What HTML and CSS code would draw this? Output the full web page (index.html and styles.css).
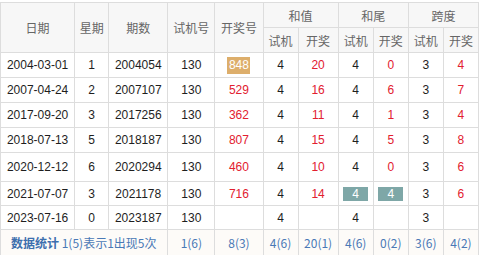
FILE: index.html
```html
<!DOCTYPE html>
<html lang="zh">
<head>
<meta charset="utf-8">
<title>开奖号码统计</title>
<link rel="stylesheet" href="styles.css">
</head>
<body>
<div class="wrap">
<table class="tbl">
  <colgroup>
    <col class="c-date"><col class="c-week"><col class="c-issue"><col class="c-test"><col class="c-open">
    <col class="c-s"><col class="c-s2"><col class="c-s"><col class="c-s"><col class="c-s"><col class="c-s">
  </colgroup>
  <thead>
    <tr class="h1">
      <th rowspan="2">日期</th>
      <th rowspan="2">星期</th>
      <th rowspan="2">期数</th>
      <th rowspan="2">试机号</th>
      <th rowspan="2">开奖号</th>
      <th colspan="2">和值</th>
      <th colspan="2">和尾</th>
      <th colspan="2">跨度</th>
    </tr>
    <tr class="h2">
      <th>试机</th><th>开奖</th><th>试机</th><th>开奖</th><th>试机</th><th>开奖</th>
    </tr>
  </thead>
  <tbody>
    <tr class="r">
      <td>2004-03-01</td><td>1</td><td>2004054</td><td>130</td>
      <td><span class="badge-gold">848</span></td>
      <td>4</td><td class="red">20</td><td>4</td><td class="red">0</td><td>3</td><td class="red">4</td>
    </tr>
    <tr class="r">
      <td>2007-04-24</td><td>2</td><td>2007107</td><td>130</td>
      <td class="red">529</td>
      <td>4</td><td class="red">16</td><td>4</td><td class="red">6</td><td>3</td><td class="red">7</td>
    </tr>
    <tr class="r">
      <td>2017-09-20</td><td>3</td><td>2017256</td><td>130</td>
      <td class="red">362</td>
      <td>4</td><td class="red">11</td><td>4</td><td class="red">1</td><td>3</td><td class="red">4</td>
    </tr>
    <tr class="r">
      <td>2018-07-13</td><td>5</td><td>2018187</td><td>130</td>
      <td class="red">807</td>
      <td>4</td><td class="red">15</td><td>4</td><td class="red">5</td><td>3</td><td class="red">8</td>
    </tr>
    <tr class="r tall">
      <td>2020-12-12</td><td>6</td><td>2020294</td><td>130</td>
      <td class="red">460</td>
      <td>4</td><td class="red">10</td><td>4</td><td class="red">0</td><td>3</td><td class="red">6</td>
    </tr>
    <tr class="r short">
      <td>2021-07-07</td><td>3</td><td>2021178</td><td>130</td>
      <td class="red">716</td>
      <td>4</td><td class="red">14</td><td><span class="badge-teal">4</span></td><td><span class="badge-teal">4</span></td><td>3</td><td class="red">6</td>
    </tr>
    <tr class="r short">
      <td>2023-07-16</td><td>0</td><td>2023187</td><td>130</td>
      <td></td>
      <td>4</td><td></td><td>4</td><td></td><td>3</td><td></td>
    </tr>
  </tbody>
  <tfoot>
    <tr class="foot">
      <td colspan="3" class="foot-label"><b>数据统计</b> 1(5)表示1出现5次</td>
      <td>1(6)</td><td>8(3)</td><td>4(6)</td><td>20(1)</td><td>4(6)</td><td>0(2)</td><td>3(6)</td><td>4(2)</td>
    </tr>
  </tfoot>
</table>
</div>
</body>
</html>
```
FILE: styles.css
```css
html, body {
  margin: 0;
  padding: 0;
  background: #ffffff;
}

.wrap {
  padding-top: 2px;
  width: 479px;
}

.tbl {
  border-collapse: collapse;
  table-layout: fixed;
  width: 479px;
  font-family: "Liberation Sans", Arial, "Noto Sans CJK SC", sans-serif;
  font-size: 12px;
  color: #1e1e1e;
}

.c-date { width: 74px; }
.c-week { width: 34px; }
.c-issue { width: 59px; }
.c-test { width: 47px; }
.c-open { width: 48px; }
.c-s { width: 35px; }
.c-s2 { width: 40px; }

.tbl th,
.tbl td {
  border: 1px solid #dddddd;
  text-align: center;
  vertical-align: middle;
  padding: 0;
  white-space: nowrap;
}

.tbl th {
  background: #f7f7f7;
  color: #666666;
  font-weight: normal;
  font-family: "Noto Sans CJK SC", sans-serif;
  font-size: 12px;
  height: 24px;
}

.r td { height: 24px; }
.r.tall td { height: 28px; }
.r.short td { height: 23px; }

.red { color: #e2202f; }

.badge-gold {
  display: inline-block;
  width: 23px;
  height: 17px;
  line-height: 17px;
  background: #ddae6b;
  color: #ffffff;
  vertical-align: middle;
}

.badge-teal {
  display: inline-block;
  width: 25px;
  height: 14px;
  line-height: 14px;
  background: #7ea7a7;
  color: #ffffff;
  vertical-align: middle;
}

.foot td {
  background: #fdfbf8;
  color: #4a79b6;
  font-family: "Noto Sans CJK SC", sans-serif;
  font-size: 12px;
  height: 25px;
}

.foot .foot-label {
  text-align: left;
  padding-left: 10px;
}

.foot-label b {
  font-weight: bold;
  color: #3d6fae;
}
```
